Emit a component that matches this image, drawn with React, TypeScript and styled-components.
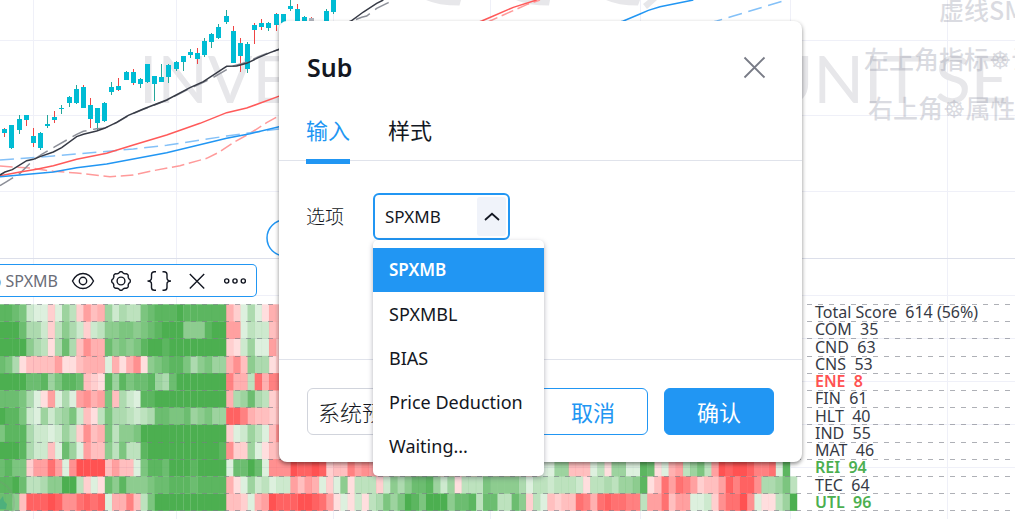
import React, { useState } from "react";
import styled, { createGlobalStyle, css } from "styled-components";

const BLUE = "#2196f3";
const INK = "#131722";

const GlobalStyle = createGlobalStyle`
  *, *::before, *::after { box-sizing: border-box; }
  html, body { margin: 0; overflow: hidden; background: #fff; }
  body, button, select { font-family: "Noto Sans", "Noto Sans CJK SC", sans-serif; color: ${INK}; }
`;

/* ---------- page ---------- */

const Page = styled.main`
  position: relative;
  display: flex;
  flex-direction: column;
  min-height: 100vh;
  overflow: hidden;
`;

const Backdrop = styled.svg`
  position: absolute;
  inset: 0;
  width: 100%;
  height: 100%;
`;

const ChartPane = styled.section`
  position: relative;
  height: 259px;
  border-bottom: 1px solid #dcdfea;
`;

const ChartSvg = styled.svg`
  display: block;
  width: 100%;
  height: 100%;
`;

const LegendRow = styled.div`
  position: relative;
  display: flex;
  padding: 5px 0 7px;
`;

const Toolbar = styled.div`
  display: flex;
  align-items: center;
  justify-content: flex-end;
  gap: 14px;
  width: 257px;
  height: 33px;
  padding-right: 9px;
  overflow: hidden;
  background: #fff;
  border: 1px solid ${BLUE};
  border-left: 0;
  border-radius: 0 5px 5px 0;
`;

const StudyName = styled.span`
  flex: none;
  margin-right: -1px;
  font-size: 16px;
  line-height: 24px;
  color: #6a6d78;
  white-space: pre;
`;

const IconButton = styled.button`
  display: flex;
  flex: none;
  padding: 0;
  background: none;
  border: 0;
  color: ${INK};
  cursor: pointer;
`;

const HeatPane = styled.section`
  position: relative;
  display: grid;
  grid-template-columns: minmax(0, 1fr);
`;

const HeatSvg = styled.svg`
  grid-area: 1 / 1;
  width: 100%;
  height: 208px;
`;

const Scores = styled.ul`
  grid-area: 1 / 1;
  display: grid;
  grid-template-rows: repeat(12, 1fr);
  height: 207px;
  margin: 0 0 0 815px;
  padding: 0;
  list-style: none;
`;

const Score = styled.li<{ $tone?: string }>`
  font-size: 16px;
  line-height: 17px;
  white-space: pre;
  color: ${(p) => p.$tone ?? "#363a45"};
  font-weight: ${(p) => (p.$tone ? 600 : 400)};
`;

/* ---------- dialog ---------- */

const Overlay = styled.div`
  position: absolute;
  inset: 0;
  display: flex;
  justify-content: center;
  align-items: flex-start;
  padding: 21px 0 0 66px;
`;

const Dialog = styled.div`
  width: 523px;
  max-width: 100%;
  background: #fff;
  border-radius: 8px;
  box-shadow: 0 2px 4px rgba(0, 0, 0, 0.45);
`;

const DialogHeader = styled.header`
  display: flex;
  align-items: center;
  justify-content: space-between;
  padding: 27px 36px 0 28px;
`;

const Title = styled.h2`
  margin: 0;
  font-size: 25px;
  line-height: 38px;
  font-weight: 600;
`;

const Tabs = styled.div`
  display: flex;
  gap: 38px;
  height: 75px;
  padding: 23px 27px 0;
  border-bottom: 1px solid #e0e3eb;
`;

const Tab = styled.button<{ $active?: boolean }>`
  height: 55px;
  padding: 0 0 12px;
  background: none;
  border: 0;
  font-size: 22px;
  line-height: 43px;
  cursor: pointer;
  ${(p) =>
    p.$active &&
    css`
      color: ${BLUE};
      box-shadow: inset 0 -5px 0 ${BLUE};
    `}
`;

const DialogBody = styled.div`
  display: flex;
  align-items: flex-start;
  height: 198px;
  padding: 32px 27px 0;
`;

const FieldLabel = styled.label`
  width: 67px;
  font-size: 19px;
  line-height: 49px;
  font-weight: 300;
`;

const Field = styled.div`
  position: relative;
`;

const SelectBox = styled.div`
  display: flex;
  width: 137px;
  height: 47px;
  padding: 2px;
  border: 2px solid ${BLUE};
  border-radius: 6px;
`;

const Select = styled.select`
  flex: 1;
  min-width: 0;
  padding: 0 0 0 8px;
  appearance: none;
  background: none;
  border: 0;
  outline: 0;
  font-size: 17px;
`;

const Chevron = styled.span`
  display: flex;
  align-items: center;
  justify-content: center;
  width: 29px;
  background: #f0f3fa;
  border-radius: 3px;
`;

const Menu = styled.ul`
  position: absolute;
  z-index: 1;
  top: 47px;
  left: 0;
  width: 171px;
  margin: 0;
  padding: 8px 0;
  list-style: none;
  background: #fff;
  border-radius: 5px;
  box-shadow: 0 2px 5px rgba(60, 60, 80, 0.4);
`;

const Option = styled.li<{ $selected: boolean }>`
  padding: 0 16px;
  font-size: 18px;
  line-height: 44px;
  white-space: nowrap;
  cursor: pointer;
  ${(p) =>
    p.$selected &&
    css`
      color: #fff;
      font-size: 17px;
      font-weight: 600;
      background: ${BLUE};
    `}
`;

const DialogFooter = styled.footer`
  display: flex;
  gap: 16px;
  padding: 28px 28px 27px;
  border-top: 1px solid #e0e3eb;
`;

const PresetSelect = styled.select`
  width: 137px;
  height: 47px;
  margin-right: auto;
  padding: 0 10px;
  appearance: none;
  background: #fff;
  border: 1px solid #d1d4dc;
  border-radius: 6px;
  font-size: 22px;
  font-weight: 300;
`;

const Button = styled.button<{ $primary?: boolean }>`
  width: 110px;
  height: 47px;
  padding: 0;
  background: ${(p) => (p.$primary ? BLUE : "#fff")};
  color: ${(p) => (p.$primary ? "#fff" : BLUE)};
  border: 1px solid ${BLUE};
  border-radius: 6px;
  font-size: 22px;
  line-height: 44px;
  cursor: pointer;
`;

/* ---------- price chart ---------- */

const GRID_X = [33, 176, 333, 490, 640, 790, 947];
const GRID_Y = [40, 115, 191, 295, 338, 381, 424, 467];

// x, high, body top, body bottom, low, wick colour; all in thirds of a pixel
type Candle = [number, number, number, number, number, string];
const CANDLES: Candle[] = [
  [13, 384, 387, 399, 411, "r"], [34, 375, 375, 444, 447, "g"], [58, 345, 357, 390, 402, "g"],
  [79, 345, 345, 360, 378, "r"], [100, 384, 408, 429, 441, "r"], [121, 396, 399, 444, 450, "g"],
  [142, 345, 372, 378, 384, "g"], [163, 333, 351, 360, 369, "r"], [184, 315, 323, 326, 342, "g"],
  [208, 288, 291, 309, 321, "g"], [229, 255, 267, 309, 312, "g"], [250, 255, 261, 324, 324, "r"],
  [271, 294, 315, 357, 384, "r"], [292, 324, 324, 369, 390, "g"], [313, 306, 309, 363, 366, "g"],
  [334, 246, 261, 276, 285, "g"], [355, 234, 258, 270, 273, "r"], [379, 213, 216, 240, 240, "g"],
  [400, 207, 216, 249, 255, "r"], [421, 234, 237, 252, 264, "g"], [442, 192, 192, 246, 249, "g"],
  [463, 228, 228, 252, 303, "g"], [484, 192, 231, 246, 246, "g"], [505, 192, 195, 231, 249, "g"],
  [529, 183, 186, 207, 213, "g"], [550, 168, 168, 186, 213, "g"], [571, 147, 156, 165, 174, "g"],
  [592, 144, 159, 177, 192, "r"], [613, 114, 123, 165, 171, "g"], [634, 99, 102, 126, 144, "g"],
  [655, 72, 81, 114, 117, "g"], [679, 30, 48, 66, 72, "g"], [700, 78, 93, 189, 189, "r"],
  [721, 114, 129, 168, 216, "r"], [742, 126, 132, 207, 219, "g"], [763, 69, 75, 90, 132, "r"],
  [784, 57, 69, 81, 90, "r"], [805, 66, 69, 84, 93, "g"], [829, 39, 42, 75, 93, "r"],
  [850, 42, 42, 72, 72, "g"], [871, 0, 18, 27, 33, "g"], [892, 12, 27, 66, 66, "r"],
  [913, 48, 51, 66, 66, "g"], [934, 51, 54, 66, 66, "n"], [979, 27, 33, 66, 66, "g"],
  [1000, 0, 0, 36, 42, "g"],
];
const WICK: Record<string, string> = { r: "#ef4444", g: "#26a69a", n: "#ef5350" };

const third = (v: number) => Math.round(v / 3);

const LINES: { color: string; dash?: string; points: string }[] = [
  { color: "#ff9a9a", dash: "38 14", points: "0,498 100,505 160,514 230,519 330,530 400,525 460,512 540,497 620,475 660,455 700,428 750,400 800,368 850,340 1470,63 1510,45 1580,14 1620,0" },
  { color: "#84c1f8", dash: "42 20", points: "0,480 160,468 400,447 500,436 680,408 850,385 2150,63 2200,48 2360,0" },
  { color: "#8c8f98", dash: "46 20", points: "0,557 20,545 60,520 100,480 125,463 165,440 230,403 250,394 290,386 313,385 350,368 385,347 430,328 500,301 570,265 610,247 640,232 680,209 700,198 740,187 775,170 810,157 840,147 1085,52 1100,48 1130,25 1165,8 1180,0" },
  { color: "#ff5a5a", points: "0,527 60,516 110,508 160,497 230,478 320,460 400,435 500,405 600,370 680,338 740,324 850,284 1445,63 1480,48 1540,22 1610,0" },
  { color: BLUE, points: "0,530 160,516 230,503 320,492 500,458 680,415 750,401 850,377 1870,63 1920,42 1945,31 1980,20 2080,0" },
  { color: "#363a45", points: "0,525 15,516 37,509 80,482 100,478 120,470 160,456 185,443 230,410 250,403 290,393 313,385 350,367 385,346 430,327 500,300 570,263 610,245 660,212 680,199 710,198 740,190 775,173 810,158 840,147 1053,63 1090,36 1130,10 1150,0" },
];

function PriceChart() {
  return (
    <ChartSvg aria-label="Price chart" role="img">
      <g fill="#e7e7ea">
        <path d="M426 0Q438 5.500 459.500 5.500L461 0Z" />
        <path d="M516 0Q528 5.500 549 5.500L550 0Z" />
        <path d="M606 0Q618 5.500 638 5.500L640 0Z" />
        <path d="M643 4L647 9L657 0L648 0Z" />
        <g fontFamily="Lato, sans-serif" fontSize="66">
          <text x="139" y="103">INVE</text>
          <text x="765" y="103">UNIT</text>
          <text x="935" y="103">SER</text>
        </g>
      </g>
      <g fill="#9598a8" fillOpacity="0.34" fontFamily='"Noto Sans CJK SC", "DejaVu Sans", sans-serif' fontSize="25" fontWeight="500">
        <text x="939" y="20">虚线SM</text>
        <text x="864" y="69">左上角指标☸设</text>
        <text x="868" y="118">右上角☸属性:</text>
      </g>
      {CANDLES.map(([x, hi, top, bottom, lo, tone]) => (
        <g key={x} shapeRendering="crispEdges">
          <rect x={third(x - 1)} y={third(hi)} width="1" height={third(lo) - third(hi)} fill={WICK[tone]} />
          <rect x={third(x - 1) - 2} y={third(top)} width="5" height={Math.max(1, third(bottom) - third(top))} fill={tone === "n" ? "#b2b5be" : "#00bcd4"} />
        </g>
      ))}
      <g transform="scale(0.33333)" fill="none" strokeWidth="4.500">
        {LINES.map((l) => (
          <polyline key={l.color} points={l.points} stroke={l.color} strokeDasharray={l.dash} />
        ))}
      </g>
      <circle cx="285" cy="238" r="18" fill="#fff" stroke={BLUE} strokeWidth="1.500" />
    </ChartSvg>
  );
}

/* ---------- sector heat map ---------- */

// One letter per cell: a–j green from strong to faint, A–J red from strong to faint.
const HIDDEN = "h".repeat(69) + "gbb";
const HEAT = [
  "bbcdijjIjfhIFHGfighhdcbbbabbbbbbGIjgjJGH" + HIDDEN,
  "aaacggiIhegiIiheeddedcbaaaeeebaaFFjhiiHH" + HIDDEN,
  "aaaaeghJgcgHEGGcededbaabaaaaaaaaIJifjjFI" + HIDDEN,
  "cdgJHHHHFJJHGGGjGJGEJedcbbdgedffGEHeggJI" + HIDDEN,
  "aaaaccbfdbbcHIJbfbdccbfgcaaaaaaaDGGhCGDD" + HIDDEN,
  "cccdgjJFjgjFEGFdHgijbbaaaaaaaaaaGgfcghIH" + HIDDEN,
  "abbdijfigfdiHJhdgghihgccddcfedffBBDGHHIH" + HIDDEN,
  "dbbbgiijifhIEHGdheedaaaaaaaaaaaaIjifhjHE" + HIDDEN,
  "aaabgiiHjcfjFHHehdhhbaaaaaaaaaabEIIfjJHH" + HIDDEN,
  "cbddIFFCFjEAAAAHFHHjdbbcaaabaaaajccacjEE" + "EABBABIHHDFEF" + "FGHHGFHIHGFHHGHIHGFHHGHj" + "jffHHHjhJffjjbcJjGFhfdhFABAABDDCjb",
  "bbachhgeeaahIjJcebeeedccbbbcbbbbGJjfihji" + "iFHFGjIjeJhhhIiegeccbfifJhhhdeeeegjhh" + "ihhhiJhhghffebJHCFCDFIHHFBDBBEggfdh",
  "cceHBBBABEECBCBjGGDHhdaaaaaaaaaaHHIjGFAB" + "BBAABCFJjJiJhgdfdabdaaaeccbhcchhceIhj" + "HIHHCDGCBCCDDhFFCHFFjjiIECCAEjJJhfa",
];
const ALPHA = [1, 0.91, 0.82, 0.73, 0.64, 0.55, 0.46, 0.37, 0.28, 0.19];
const COL = 7.136;
const ROW = 17.2;

function cellFill(code: string) {
  const green = code >= "a";
  const alpha = ALPHA[code.charCodeAt(0) - (green ? 97 : 65)];
  return green ? `rgba(76,175,80,${alpha})` : `rgba(255,82,82,${alpha})`;
}

function HeatMap() {
  return (
    <HeatSvg aria-label="Sector heat map" role="img">
      {HEAT.map((row, r) =>
        row.slice(0, 112).split("").map((c, i) => (
          <rect key={`${r}-${i}`} x={i * COL - 2.2} y={r * ROW + 0.3} width={COL + 0.2} height={ROW + 0.2} fill={cellFill(c)} />
        )),
      )}
      {Array.from({ length: 13 }, (_, i) => {
        const y = Math.round(i * ROW) + 0.5;
        return <line key={i} x1="0" x2="100%" y1={y} y2={y} stroke="#787b86" strokeOpacity="0.6" strokeDasharray="5 6" strokeDashoffset="7" />;
      })}
      <circle cx="-9" cy="199" r="23" fill="none" stroke="#888" strokeOpacity="0.2" strokeWidth="2" />
      <path d="M0 196L3 192L4 197L7 200L6 205L0 205Z" fill="#4db07c" />
    </HeatSvg>
  );
}

const GREEN = "#4caf50";
const RED = "#ff5252";
const SCORES: { text: string; tone?: string }[] = [
  { text: "Total Score  614 (56%)" },
  { text: "COM  35" },
  { text: "CND  63" },
  { text: "CNS  53" },
  { text: "ENE  8", tone: RED },
  { text: "FIN  61" },
  { text: "HLT  40" },
  { text: "IND  55" },
  { text: "MAT  46" },
  { text: "REI  94", tone: GREEN },
  { text: "TEC  64" },
  { text: "UTL  96", tone: GREEN },
];

/* ---------- toolbar icons ---------- */

const Glyph = ({ children }: { children: React.ReactNode }) => (
  <svg width="24" height="24" viewBox="0 0 24 24" fill="none" stroke="currentColor" strokeWidth="1.400">
    {children}
  </svg>
);

// Scalloped outline: eight teeth around the centre of a 24px box.
const gearPath = (() => {
  const pts: string[] = [];
  for (let i = 0; i <= 96; i++) {
    const a = (i / 96) * Math.PI * 2;
    const wave = Math.cos(8 * a);
    const r = 8.7 + 0.6 * Math.sign(wave) * Math.pow(Math.abs(wave), 0.5);
    pts.push(`${(12 + r * Math.cos(a)).toFixed(2)} ${(12 + r * Math.sin(a)).toFixed(2)}`);
  }
  return `M${pts.join("L")}Z`;
})();

const TOOLS = [
  {
    name: "Hide",
    art: (
      <>
        <path d="M1.500 12C4 7 8 4.500 12 4.500S20 7 22.500 12C20 17 16 19.500 12 19.500S4 17 1.500 12Z" />
        <circle cx="12" cy="12" r="3.700" />
      </>
    ),
  },
  {
    name: "Settings",
    art: (
      <>
        <path d={gearPath} strokeLinejoin="round" />
        <circle cx="12" cy="12" r="3.900" />
      </>
    ),
  },
  {
    name: "Source code",
    art: (
      <path d="M9 2.700H7.500Q4.500 2.700 4.500 5.500V9Q4.500 12 0.500 12Q4.500 12 4.500 15V18.500Q4.500 21.300 7.500 21.300H9M15.500 2.700H17Q20 2.700 20 5.500V9Q20 12 24 12Q20 12 20 15V18.500Q20 21.300 17 21.300H15.500" />
    ),
  },
  { name: "Remove", art: <path d="M4.800 5L19.200 19.400M19.200 5L4.800 19.400" /> },
  {
    name: "More",
    art: (
      <>
        <circle cx="3.700" cy="12" r="2.100" />
        <circle cx="12" cy="12" r="2.100" />
        <circle cx="20.300" cy="12" r="2.100" />
      </>
    ),
  },
];

const OPTIONS = ["SPXMB", "SPXMBL", "BIAS", "Price Deduction", "Waiting..."];

export default function App() {
  const [value, setValue] = useState(OPTIONS[0]);

  return (
    <Page>
      <GlobalStyle />
      <Backdrop aria-hidden="true" stroke="#eff0f8" strokeWidth="1">
        {GRID_X.map((x) => (
          <line key={x} x1={x + 0.5} x2={x + 0.5} y1="0" y2="100%" />
        ))}
        {GRID_Y.map((y) => (
          <line key={y} x1="0" x2="100%" y1={y + 0.5} y2={y + 0.5} />
        ))}
      </Backdrop>

      <ChartPane>
        <PriceChart />
      </ChartPane>

      <LegendRow>
        <Toolbar>
          <StudyName>b SPXMB</StudyName>
          {TOOLS.map((t) => (
            <IconButton key={t.name} type="button" aria-label={t.name}>
              <Glyph>{t.art}</Glyph>
            </IconButton>
          ))}
        </Toolbar>
      </LegendRow>

      <HeatPane>
        <HeatMap />
        <Scores>
          {SCORES.map((s) => (
            <Score key={s.text} $tone={s.tone}>
              {s.text}
            </Score>
          ))}
        </Scores>
      </HeatPane>

      <Overlay>
        <Dialog role="dialog" aria-labelledby="dialog-title">
          <DialogHeader>
            <Title id="dialog-title">Sub</Title>
            <IconButton type="button" aria-label="Close">
              <svg width="23" height="23" viewBox="0 0 23 23" stroke="#787b86" strokeWidth="1.800">
                <path d="M1.500 1.500L21.500 21.500M21.500 1.500L1.500 21.500" />
              </svg>
            </IconButton>
          </DialogHeader>

          <Tabs role="tablist">
            <Tab type="button" role="tab" aria-selected="true" $active>
              输入
            </Tab>
            <Tab type="button" role="tab" aria-selected="false">
              样式
            </Tab>
          </Tabs>

          <DialogBody>
            <FieldLabel htmlFor="sub-option">选项</FieldLabel>
            <Field>
              <SelectBox>
                <Select id="sub-option" value={value} onChange={(e) => setValue(e.target.value)}>
                  {OPTIONS.map((o) => (
                    <option key={o}>{o}</option>
                  ))}
                </Select>
                <Chevron>
                  <svg width="16" height="10" viewBox="0 0 16 10" fill="none" stroke={INK} strokeWidth="1.800">
                    <path d="M1 8L8 1.800L15 8" />
                  </svg>
                </Chevron>
              </SelectBox>
              <Menu role="listbox" aria-label="选项">
                {OPTIONS.map((o) => (
                  <Option key={o} role="option" aria-selected={o === value} $selected={o === value} onClick={() => setValue(o)}>
                    {o}
                  </Option>
                ))}
              </Menu>
            </Field>
          </DialogBody>

          <DialogFooter>
            <PresetSelect aria-label="系统预设" defaultValue="系统预设">
              <option>系统预设</option>
            </PresetSelect>
            <Button type="button">取消</Button>
            <Button type="button" $primary>
              确认
            </Button>
          </DialogFooter>
        </Dialog>
      </Overlay>
    </Page>
  );
}
